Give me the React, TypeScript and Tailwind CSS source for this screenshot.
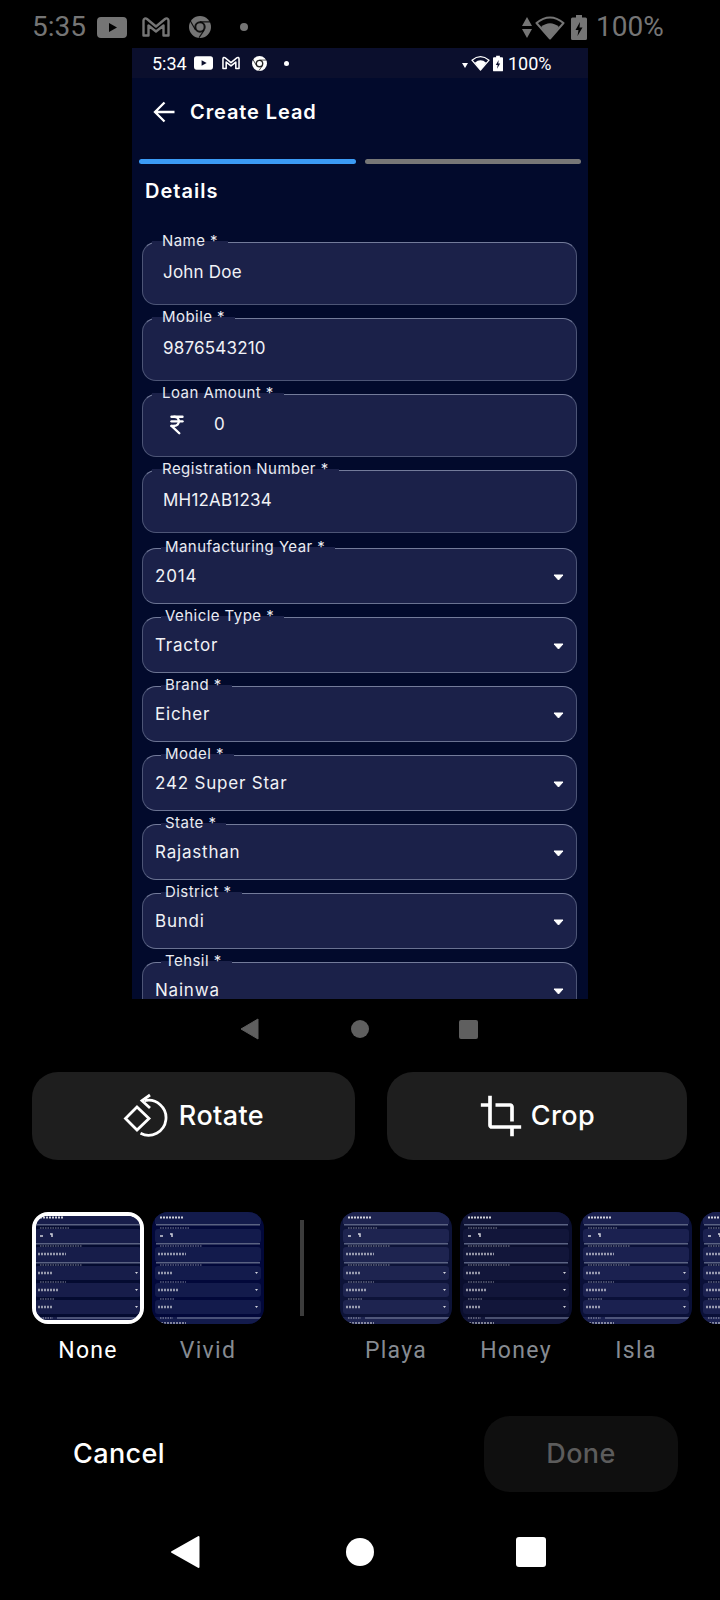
import { IndianRupee } from "lucide-react";

const ui = "font-['Inter',sans-serif]";
const android = "font-['Roboto',sans-serif]";

const textFields = [
  { label: "Name *", value: "John Doe" },
  { label: "Mobile *", value: "9876543210" },
  { label: "Loan Amount *", value: "0", rupee: true },
  { label: "Registration Number *", value: "MH12AB1234" },
];

const selectFields = [
  { label: "Manufacturing Year *", value: "2014" },
  { label: "Vehicle Type *", value: "Tractor" },
  { label: "Brand *", value: "Eicher" },
  { label: "Model *", value: "242 Super Star" },
  { label: "State *", value: "Rajasthan" },
  { label: "District *", value: "Bundi" },
  { label: "Tehsil *", value: "Nainwa" },
];

const filters = [
  { name: "None", page: "#040b30", fill: "#171d4a", selected: true },
  { name: "Vivid", page: "#02083a", fill: "#131b4c" },
  { name: "Playa", page: "#0d1338", fill: "#1e2450" },
  { name: "Honey", page: "#0a0e2e", fill: "#12163a" },
  { name: "Isla", page: "#0a1038", fill: "#1b2150" },
  { name: "", page: "#0a1038", fill: "#1b2150" },
];

const YouTube = ({ w, h, color }: { w: number; h: number; color: string }) => (
  <svg width={w} height={h} viewBox="0 0 30 21" className="shrink-0">
    <path
      fillRule="evenodd"
      fill={color}
      d="M4 0h22a4 4 0 0 1 4 4v13a4 4 0 0 1-4 4H4a4 4 0 0 1-4-4V4a4 4 0 0 1 4-4zM12 6v9l8-4.5z"
    />
  </svg>
);

const Gmail = ({ w, h, color }: { w: number; h: number; color: string }) => (
  <svg width={w} height={h} viewBox="0 0 28 20" className="shrink-0">
    <path
      fill="none"
      stroke={color}
      strokeWidth="2.400"
      strokeLinejoin="round"
      d="M1.500 18.500V3.500C1.500 1.500 3.500.8 5 2l9 7.500L23 2c1.500-1.200 3.500-.5 3.500 1.500v15h-5V8.500L14 14.500 6.500 8.500v10z"
    />
  </svg>
);

const Chrome = ({ size, color }: { size: number; color: string }) => (
  <svg width={size} height={size} viewBox="0 0 24 24" className="shrink-0">
    <circle cx="12" cy="12" r="12" fill={color} />
    <circle cx="12" cy="12" r="6.200" fill="#000" fillOpacity="0.85" />
    <circle cx="12" cy="12" r="4" fill={color} />
    <path d="M12 6.500H23M7 15L1.500 5.500M16.500 15.500L11 23.500" stroke="#000" strokeOpacity="0.85" strokeWidth="1.300" />
  </svg>
);

const Wifi = ({ w, h, color }: { w: number; h: number; color: string }) => (
  <svg width={w} height={h} viewBox="0 0 30 25" className="shrink-0">
    <path d="M1.500 8Q15-3 28.500 8L15 23.500z" fill="none" stroke={color} strokeWidth="2" strokeLinejoin="round" />
    <path d="M6 12Q15 4.500 24 12L15 23.500z" fill={color} />
  </svg>
);

const Battery = ({ w, h, color }: { w: number; h: number; color: string }) => (
  <svg width={w} height={h} viewBox="0 0 16 25" className="shrink-0">
    <path
      fillRule="evenodd"
      fill={color}
      d="M5 0h6v2.500h3.500a1.500 1.500 0 0 1 1.500 1.500v19.500a1.500 1.500 0 0 1-1.500 1.500h-13A1.500 1.500 0 0 1 0 23.500V4a1.500 1.500 0 0 1 1.500-1.500H5zM9 7L4.500 15H7.500L6.500 21 11.500 12.500H8.500z"
    />
  </svg>
);

const Label = ({ text, left, pad }: { text: string; left: string; pad: string }) => (
  <div className={`absolute -top-[12px] ${left} ${pad} pr-[10px] h-[20px] flex items-center`}>
    <span className="absolute left-0 right-0 top-[10px] h-[3px] bg-[#1b2149]" />
    <span className="relative text-[15px] tracking-[0.45px] leading-[20px] text-[#e9ebf2] whitespace-nowrap">
      {text}
    </span>
  </div>
);

const Field = ({ label, value, rupee }: { label: string; value: string; rupee?: boolean }) => (
  <div className="relative h-[63px] shrink-0 rounded-[14px] border border-[#4d5576] border-t-[#737b9a] bg-[#1b2149] flex items-center pl-[20px] pb-[2px]">
    <Label text={label} left="left-[9px]" pad="pl-[10px]" />
    {rupee ? (
      <>
        <IndianRupee size={22} strokeWidth={2.6} className="text-white ml-[3px]" />
        <span className="ml-[26px] text-[17px] text-[#f1f2f6]">{value}</span>
      </>
    ) : (
      <span className="text-[17px] tracking-[0.2px] text-[#f1f2f6]">{value}</span>
    )}
  </div>
);

const Select = ({ label, value }: { label: string; value: string }) => (
  <div className="relative h-[56px] shrink-0 rounded-[14px] border border-[#4d5576] border-t-[#737b9a] border-b-[#6a7291] bg-[#1b2149] flex items-center justify-between pl-[12px] pr-[12px]">
    <Label text={label} left="left-[18px]" pad="pl-[4px]" />
    <span className="text-[17px] tracking-[0.8px] leading-[24px] text-[#f1f2f6]">{value}</span>
    <svg width="11" height="7" viewBox="0 0 11 7" className="mt-[3px]">
      <path d="M1 1h9L5.500 6z" fill="#fff" stroke="#fff" strokeLinejoin="round" />
    </svg>
  </div>
);

const Screen = () => (
  <div className={`ml-[132px] w-[456px] h-[951px] bg-[#020a2c] overflow-hidden flex flex-col ${ui}`}>
    <div className={`h-[30px] shrink-0 bg-[#0b0f2d] flex items-center pl-[20px] ${android}`}>
      <span className="text-[18px] text-white w-[42px]">5:34</span>
      <YouTube w={19} h={14} color="#fff" />
      <span className="w-[9px]" />
      <Gmail w={18} h={14} color="#fff" />
      <span className="w-[12px]" />
      <Chrome size={15} color="#fff" />
      <span className="w-[17px]" />
      <span className="w-[5px] h-[5px] rounded-full bg-white" />
      <svg width="6" height="5" viewBox="0 0 6 5" className="ml-[173px] mt-[5px]">
        <path d="M0 0h6L3 5z" fill="#fff" />
      </svg>
      <span className="w-[3px]" />
      <Wifi w={19} h={16} color="#fff" />
      <span className="w-[3px]" />
      <Battery w={10} h={17} color="#fff" />
      <span className="ml-[5px] text-[18px] text-white">100%</span>
    </div>

    <div className="h-[68px] shrink-0 flex items-center pl-[21px]">
      <svg width="22" height="22" viewBox="0 0 22 22">
        <path d="M21.500 11H2M11.500 1.500L2 11l9.500 9.500" fill="none" stroke="#fff" strokeWidth="2.300" />
      </svg>
      <span className="ml-[15px] text-[20px] font-semibold tracking-[0.9px] text-white">Create Lead</span>
    </div>

    <div className="mt-[13px] px-[7px] flex gap-[9px] shrink-0">
      <div className="h-[5px] flex-1 rounded-full bg-[#3b9bf5]" />
      <div className="h-[5px] flex-1 rounded-full bg-[#777777]" />
    </div>

    <h2 className="mt-[13px] pl-[13px] h-[28px] shrink-0 text-[20px] leading-[28px] font-semibold tracking-[1px] text-white">
      Details
    </h2>

    <div className="mt-[37px] pl-[10px] pr-[11px] flex flex-col gap-[13px]">
      {textFields.map((f) => (
        <Field key={f.label} {...f} />
      ))}
      <div className="h-[2px] shrink-0 -mb-[13px]" />
      {selectFields.map((f) => (
        <Select key={f.label} {...f} />
      ))}
    </div>
  </div>
);

const rows = [
  { y: 17, h: 14, label: 30, value: 0, glyph: true, line: true },
  { y: 35, h: 15, label: 42, value: 24, line: true },
  { y: 54, h: 14, label: 42, value: 10, arrow: true },
  { y: 71, h: 14, label: 26, value: 16, arrow: true },
  { y: 88, h: 14, label: 14, value: 10, arrow: true },
];

// the small preview picture of each filter
const Thumb = ({ page, fill, selected }: { page: string; fill: string; selected?: boolean }) => (
  <div
    className={`w-[112px] h-[112px] shrink-0 rounded-[16px] overflow-hidden ${selected ? "border-[4px] border-white" : ""}`}
    style={{ background: page }}
  >
    <svg width="112" height="112" viewBox="0 0 112 112" className={`blur-[0.4px] ${selected ? "-m-[4px]" : ""}`}>
      <rect x="3" y="0" width="106" height="12" fill={fill} />
      <path d="M8 5.500h24" stroke="#fff" strokeWidth="2" strokeDasharray="2 1" strokeOpacity="0.8" />
      <rect x="4" y="12" width="104" height="1.500" fill="#5a6282" />
      {rows.map((r) => (
        <g key={r.y}>
          <rect x="3" y={r.y} width="106" height={r.h} rx="3" fill={fill} />
          {r.line && <rect x="4" y={r.y + r.h} width="104" height="1.500" fill="#5a6282" />}
          <path
            d={`M8 ${r.y - 1}h${r.label}`}
            stroke="#fff"
            strokeWidth="1.200"
            strokeDasharray="1.500 1"
            strokeOpacity="0.5"
          />
          {r.glyph ? (
            <path d="M8 24h3M18 22h2v3" stroke="#fff" strokeWidth="1.500" strokeOpacity="0.8" fill="none" />
          ) : (
            <path
              d={`M6 ${r.y + 7}h${r.value + 4}`}
              stroke="#fff"
              strokeWidth="2.500"
              strokeDasharray="2 1"
              strokeOpacity="0.55"
            />
          )}
          {r.arrow && <path d={`M103 ${r.y + 6}h3l-1.500 2z`} fill="#fff" fillOpacity="0.8" />}
        </g>
      ))}
      <rect x="3" y="105" width="106" height="7" fill={fill} />
      <path d="M25 106h84" stroke="#8189a5" strokeWidth="1" />
      <path d="M8 106h13" stroke="#fff" strokeWidth="1.200" strokeDasharray="1.500 1" strokeOpacity="0.6" />
      <path d="M6 111h28" stroke="#fff" strokeWidth="1.500" strokeDasharray="2 1" strokeOpacity="0.6" />
    </svg>
  </div>
);

const Filter = ({ f }: { f: (typeof filters)[number] }) => (
  <div className="w-[112px] shrink-0 flex flex-col items-center">
    <Thumb page={f.page} fill={f.fill} selected={f.selected} />
    <span
      className={`mt-[12px] h-[30px] text-[23px] leading-[30px] tracking-[1.3px] ${
        f.selected ? "text-white" : "text-[#868b92]"
      }`}
    >
      {f.name}
    </span>
  </div>
);

export default function App() {
  return (
    <div className={`w-[720px] h-[1600px] bg-black overflow-hidden flex flex-col ${android}`}>
      <div className="h-[48px] shrink-0 flex items-center pl-[32px] pt-[6px] text-[#757575]">
        <span className="text-[28px] w-[65px]">5:35</span>
        <YouTube w={30} h={21} color="#757575" />
        <span className="w-[15px]" />
        <Gmail w={28} h={20} color="#757575" />
        <span className="w-[19px]" />
        <Chrome size={22} color="#757575" />
        <span className="w-[29px]" />
        <span className="w-[8px] h-[8px] rounded-full bg-[#757575]" />
        <svg width="10" height="21" viewBox="0 0 10 21" className="ml-[274px]">
          <path d="M5 0l5 9H0zM0 12h10l-5 9z" fill="#757575" />
        </svg>
        <span className="w-[3px]" />
        <Wifi w={30} h={25} color="#757575" />
        <span className="w-[6px]" />
        <Battery w={16} h={25} color="#757575" />
        <span className="ml-[9px] text-[28px]">100%</span>
      </div>

      <Screen />

      <div className="h-[60px] shrink-0 flex items-center pl-[240px]">
        <svg width="19" height="22" viewBox="0 0 19 22">
          <path d="M18 1v20L1 11z" fill="#5f5f5f" stroke="#5f5f5f" strokeLinejoin="round" />
        </svg>
        <span className="ml-[92px] w-[18px] h-[18px] rounded-full bg-[#5f5f5f]" />
        <span className="ml-[90px] w-[19px] h-[19px] rounded-[2px] bg-[#5f5f5f]" />
      </div>

      <div className={`mt-[13px] pl-[32px] pr-[33px] flex gap-[32px] shrink-0 ${ui}`}>
        <button className="w-[323px] h-[88px] rounded-[26px] bg-[#1e1e1e] flex items-center justify-center gap-[10px] text-white">
          <svg width="46" height="46" viewBox="0 0 46 46" fill="none" stroke="#fff" strokeWidth="2.800">
            <path d="M14 14L26 25.500 14 37 2.500 25.500z" />
            <path d="M17.500 40.300A17.500 17.500 0 1 0 21.500 7.700" />
            <path d="M27 2L19 7.700 27 15" />
          </svg>
          <span className="text-[27px] font-medium tracking-[0.4px]">Rotate</span>
        </button>
        <button className="w-[300px] h-[88px] rounded-[26px] bg-[#1e1e1e] flex items-center justify-center gap-[8px] text-white">
          <svg width="44" height="44" viewBox="0 0 24 24" fill="#fff">
            <path d="M17 15h2V7c0-1.100-.9-2-2-2H9v2h8v8zM7 17V1H5v4H1v2h4v10c0 1.100.9 2 2 2h10v4h2v-4h4v-2H7z" />
          </svg>
          <span className="text-[27px] font-medium tracking-[0.4px]">Crop</span>
        </button>
      </div>

      <div className="mt-[52px] pl-[32px] flex shrink-0">
        <Filter f={filters[0]} />
        <div className="ml-[8px]">
          <Filter f={filters[1]} />
        </div>
        <div className="ml-[36px] w-[4px] h-[96px] mt-[8px] bg-[#3c3c3c] shrink-0" />
        <div className="ml-[36px] flex gap-[8px]">
          {filters.slice(2).map((f) => (
            <Filter key={f.name || "more"} f={f} />
          ))}
        </div>
      </div>

      <div className={`mt-[50px] pl-[73px] pr-[42px] flex items-center justify-between shrink-0 ${ui}`}>
        <span className="text-[27px] font-medium tracking-[0.4px] text-white">Cancel</span>
        <button className="w-[194px] h-[76px] rounded-[26px] bg-[#0f0f0f] text-[27px] font-medium tracking-[0.4px] text-[#5c5c5c]">
          Done
        </button>
      </div>

      <div className="mt-[43px] pl-[170px] flex items-center shrink-0">
        <svg width="30" height="34" viewBox="0 0 30 34">
          <path d="M28.500 2v30L2 17z" fill="#fff" stroke="#fff" strokeWidth="2" strokeLinejoin="round" />
        </svg>
        <span className="ml-[146px] w-[28px] h-[28px] rounded-full bg-white" />
        <span className="ml-[142px] w-[30px] h-[30px] rounded-[3px] bg-white" />
      </div>
    </div>
  );
}
